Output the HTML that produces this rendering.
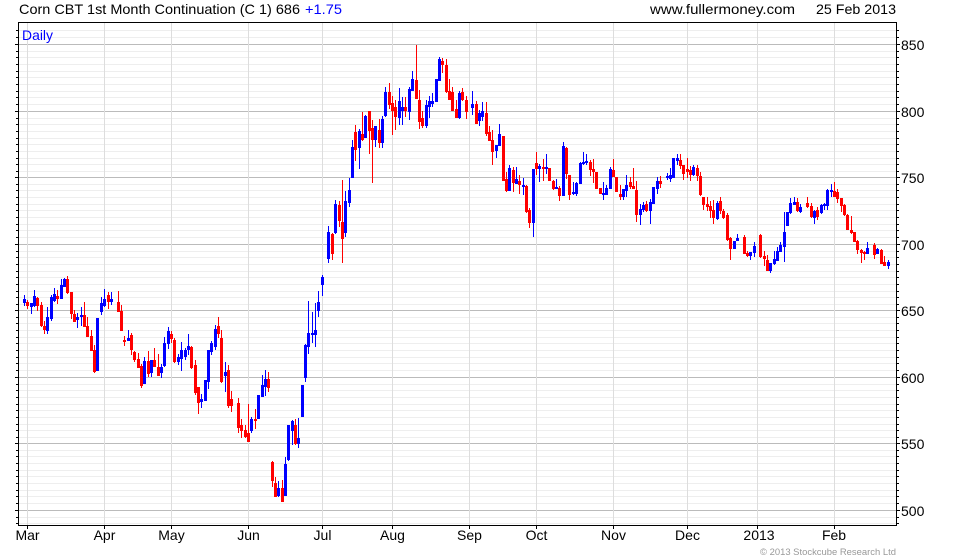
<!DOCTYPE html>
<html><head><meta charset="utf-8"><title>Corn CBT chart</title>
<style>html,body{margin:0;padding:0;background:#fff}svg{display:block}text{font-family:"Liberation Sans",Arial,sans-serif;font-size:14px;fill:#000}</style></head>
<body>
<svg width="980" height="560" viewBox="0 0 980 560" xmlns="http://www.w3.org/2000/svg">
<defs>
<path id="m" d="M0 30.5H1M0 37.5H1M0 51.5H1M0 57.5H1M0 64.5H1M0 71.5H1M0 77.5H1M0 84.5H1M0 91.5H1M0 97.5H1M0 104.5H1M0 118.5H1M0 124.5H1M0 131.5H1M0 138.5H1M0 144.5H1M0 151.5H1M0 158.5H1M0 164.5H1M0 171.5H1M0 184.5H1M0 190.5H1M0 197.5H1M0 204.5H1M0 210.5H1M0 217.5H1M0 224.5H1M0 230.5H1M0 237.5H1M0 251.5H1M0 257.5H1M0 264.5H1M0 271.5H1M0 277.5H1M0 284.5H1M0 291.5H1M0 297.5H1M0 304.5H1M0 317.5H1M0 323.5H1M0 330.5H1M0 337.5H1M0 343.5H1M0 350.5H1M0 357.5H1M0 363.5H1M0 370.5H1M0 384.5H1M0 390.5H1M0 397.5H1M0 404.5H1M0 410.5H1M0 417.5H1M0 424.5H1M0 430.5H1M0 437.5H1M0 450.5H1M0 456.5H1M0 463.5H1M0 470.5H1M0 476.5H1M0 483.5H1M0 490.5H1M0 496.5H1M0 503.5H1M0 517.5H1M0 523.5H1"/>
<path id="j" d="M0 44.5H1M0 111.5H1M0 177.5H1M0 244.5H1M0 310.5H1M0 377.5H1M0 443.5H1M0 510.5H1"/>
</defs>
<g shape-rendering="crispEdges" fill="none" stroke-width="1">
<use href="#m" stroke="#eeeeee" transform="translate(19 0) scale(877 1)"/>
<use href="#j" stroke="#bbbbbb" transform="translate(19 0) scale(877 1)"/>
<path stroke="#dddddd" d="M27.5 23V525M104.5 23V525M171.5 23V525M248.5 23V525M322.5 23V525M392.5 23V525M469.5 23V525M536.5 23V525M613.5 23V525M687.5 23V525M757.5 23V525M834.5 23V525"/>
<path stroke="#000" d="M18.5 22.5H896.5V525.5H18.5Z"/>
<use href="#m" stroke="#000" transform="translate(16 0) scale(2 1)"/>
<use href="#m" stroke="#000" transform="translate(897 0) scale(2 1)"/>
<use href="#j" stroke="#000" transform="translate(15 0) scale(3 1)"/>
<use href="#j" stroke="#000" transform="translate(897 0) scale(3 1)"/>
<path stroke="#000" d="M27.5 526V529M104.5 526V529M171.5 526V529M248.5 526V529M322.5 526V529M392.5 526V529M469.5 526V529M536.5 526V529M613.5 526V529M687.5 526V529M757.5 526V529M834.5 526V529"/>

<!-- blue wicks -->
<path stroke="#0000ff" d="M24.5 295V306M31.5 303V314M34.5 290V307M47.5 307V334M51.5 295V321M54.5 288V302M61.5 279V299M64.5 278V287M77.5 313V328M81.5 307V326M97.5 318V371M101.5 297V315M104.5 289V307M111.5 292V305M128.5 330V341M144.5 357V384M151.5 360V377M161.5 364V378M164.5 337V367M168.5 327V349M178.5 354V365M181.5 342V371M185.5 348V360M188.5 334V355M201.5 394V408M205.5 380V401M208.5 350V389M211.5 341V355M215.5 325V350M225.5 362V392M251.5 417V433M258.5 395V419M262.5 375V397M265.5 370V396M278.5 481V497M285.5 457V496M288.5 425V461M292.5 420V445M298.5 418V448M302.5 385V417M305.5 344V382M308.5 301V354M312.5 312V343M315.5 303V347M318.5 291V317M322.5 275V296M328.5 226V263M335.5 200V234M345.5 191V237M349.5 178V207M352.5 140V178M359.5 129V169M365.5 115V138M375.5 126V147M382.5 116V148M385.5 87V117M399.5 88V125M402.5 97V125M409.5 87V120M412.5 71V91M426.5 100V128M429.5 96V118M432.5 93V107M436.5 79V102M439.5 57V81M459.5 91V119M472.5 91V115M479.5 110V126M482.5 102V121M496.5 145V158M499.5 124V146M509.5 165V191M516.5 167V184M523.5 178V195M533.5 169V237M539.5 164V182M546.5 154V174M556.5 179V189M563.5 142V196M573.5 182V195M576.5 182V196M580.5 162V184M583.5 152V165M586.5 154V165M603.5 182V200M606.5 185V195M610.5 167V189M623.5 189V200M626.5 175V197M640.5 204V225M643.5 202V212M650.5 199V224M653.5 187V204M657.5 177V194M667.5 173V180M670.5 168V182M673.5 158V178M677.5 154V165M693.5 165V176M717.5 201V220M734.5 241V249M737.5 234V241M750.5 252V260M754.5 242V257M770.5 263V273M774.5 251V265M777.5 247V261M780.5 242V252M784.5 212V262M787.5 212V226M790.5 198V214M794.5 197V205M800.5 204V213M814.5 210V224M821.5 204V214M824.5 203V210M827.5 189V210M831.5 184V197M867.5 242V254M877.5 248V254M888.5 260V269"/>
<!-- blue bodies -->
<path stroke="#0000ff" stroke-width="3" d="M24.5 299V303M31.5 303V307M34.5 296V306M47.5 317V331M51.5 297V319M54.5 294V301M61.5 285V299M64.5 279V287M77.5 317V320M81.5 315V317M97.5 318V371M101.5 303V312M104.5 299V306M111.5 299V302M128.5 338V341M144.5 361V384M151.5 360V373M161.5 367V373M164.5 343V366M168.5 331V344M178.5 357V362M181.5 350V359M185.5 350V357M188.5 346V350M201.5 399V402M205.5 380V401M208.5 350V382M211.5 343V352M215.5 329V347M225.5 372V376M251.5 419V431M258.5 395V419M262.5 385V397M265.5 379V387M278.5 488V496M285.5 464V496M288.5 425V460M292.5 421V431M298.5 438V444M302.5 385V417M305.5 345V378M308.5 333V347M312.5 333V335M315.5 330V335M318.5 302V311M322.5 277V285M328.5 232V259M335.5 204V233M345.5 201V233M349.5 190V203M352.5 147V178M359.5 131V148M365.5 116V138M375.5 126V140M382.5 119V143M385.5 92V116M399.5 101V118M402.5 107V111M409.5 89V112M412.5 79V91M426.5 105V126M429.5 101V107M432.5 101V104M436.5 79V102M439.5 59V81M459.5 93V118M472.5 104V108M479.5 113V121M482.5 111V117M496.5 145V151M499.5 134V146M509.5 168V191M516.5 179V184M523.5 185V187M533.5 169V223M539.5 166V169M546.5 167V169M556.5 187V189M563.5 146V196M573.5 192V194M576.5 183V194M580.5 163V184M583.5 162V164M586.5 161V163M603.5 193V195M606.5 188V195M610.5 169V189M623.5 189V197M626.5 185V191M640.5 209V215M643.5 205V210M650.5 202V211M653.5 187V204M657.5 181V189M667.5 176V178M670.5 175V179M673.5 158V178M677.5 158V161M693.5 167V175M717.5 203V219M734.5 241V249M737.5 238V241M750.5 252V256M754.5 246V253M770.5 263V271M774.5 259V264M777.5 251V261M780.5 245V252M784.5 232V247M787.5 212V226M790.5 203V213M794.5 202V205M800.5 207V212M814.5 211V218M821.5 205V213M824.5 204V206M827.5 190V206M831.5 190V192M867.5 248V254M877.5 249V254M888.5 262V266"/>
<!-- red wicks -->
<path stroke="#ff0000" d="M27.5 300V309M37.5 297V311M41.5 302V327M44.5 321V334M57.5 290V304M67.5 276V294M71.5 292V319M74.5 310V322M84.5 302V327M87.5 317V337M91.5 330V351M94.5 345V373M108.5 292V309M118.5 291V312M121.5 305V331M124.5 336V346M131.5 333V355M134.5 351V362M138.5 353V368M141.5 364V388M148.5 351V377M154.5 348V367M158.5 354V376M171.5 331V343M174.5 338V363M191.5 346V369M195.5 360V395M198.5 387V414M218.5 317V338M221.5 330V383M228.5 365V408M231.5 391V412M238.5 398V433M241.5 419V438M245.5 425V438M248.5 404V442M255.5 409V429M268.5 372V392M272.5 461V487M275.5 477V497M282.5 480V502M295.5 419V445M332.5 233V260M339.5 201V227M342.5 180V263M355.5 125V161M362.5 112V141M369.5 111V154M372.5 120V183M379.5 119V148M389.5 83V109M392.5 96V135M395.5 100V130M405.5 97V117M416.5 45V99M419.5 90V129M422.5 111V128M442.5 58V73M446.5 59V93M449.5 79V100M452.5 87V111M456.5 100V118M462.5 88V101M466.5 96V119M476.5 101V124M486.5 102V136M489.5 126V141M492.5 130V165M503.5 136V181M506.5 172V192M513.5 167V192M519.5 175V194M526.5 185V213M529.5 208V228M536.5 152V175M543.5 159V181M549.5 168V181M553.5 180V190M559.5 186V201M566.5 147V179M569.5 175V200M590.5 160V176M593.5 159V183M596.5 172V189M600.5 188V194M613.5 159V177M616.5 177V192M620.5 185V200M630.5 177V189M633.5 168V189M636.5 181V222M646.5 201V212M660.5 176V188M680.5 154V169M683.5 165V180M687.5 158V178M690.5 166V181M697.5 165V181M700.5 172V196M703.5 197V210M707.5 197V211M710.5 201V218M713.5 200V224M720.5 197V214M723.5 209V219M727.5 213V241M730.5 237V260M744.5 235V254M747.5 251V257M760.5 234V258M764.5 251V266M767.5 255V271M797.5 198V212M807.5 197V208M811.5 203V218M817.5 207V220M834.5 182V197M837.5 189V203M841.5 198V212M844.5 204V216M847.5 214V230M851.5 216V234M854.5 232V242M857.5 240V254M861.5 249V263M864.5 251V260M874.5 243V259M881.5 249V264M884.5 256V266"/>
<!-- red bodies -->
<path stroke="#ff0000" stroke-width="3" d="M27.5 302V306M37.5 298V306M41.5 305V326M44.5 326V330M57.5 296V299M67.5 279V293M71.5 292V314M74.5 314V322M84.5 315V327M87.5 326V337M91.5 336V351M94.5 350V372M108.5 295V302M118.5 302V312M121.5 311V331M124.5 340V342M131.5 335V350M134.5 352V360M138.5 359V368M141.5 366V386M148.5 361V374M154.5 360V367M158.5 367V376M171.5 334V339M174.5 340V362M191.5 347V368M195.5 365V393M198.5 387V403M218.5 326V334M221.5 338V382M228.5 370V406M231.5 399V406M238.5 403V428M241.5 425V431M245.5 430V437M248.5 433V442M255.5 419V421M268.5 379V388M272.5 462V481M275.5 483V497M282.5 488V502M295.5 425V444M332.5 234V254M339.5 205V221M342.5 222V239M355.5 132V150M362.5 134V140M369.5 111V131M372.5 128V140M379.5 130V143M389.5 92V105M392.5 103V111M395.5 107V117M405.5 107V111M416.5 80V99M419.5 100V122M422.5 118V126M442.5 61V65M446.5 65V92M449.5 91V100M452.5 92V111M456.5 109V118M462.5 92V100M466.5 100V112M476.5 104V124M486.5 113V134M489.5 132V141M492.5 140V152M503.5 136V181M506.5 179V191M513.5 170V183M519.5 181V185M526.5 186V212M529.5 210V223M536.5 163V169M543.5 167V169M549.5 168V181M553.5 181V189M559.5 188V196M566.5 148V174M569.5 175V195M590.5 162V170M593.5 169V172M596.5 172V189M600.5 188V194M613.5 170V177M616.5 177V192M620.5 194V197M630.5 182V187M633.5 186V189M636.5 190V215M646.5 204V211M660.5 181V184M680.5 160V166M683.5 165V174M687.5 169V172M690.5 170V175M697.5 168V176M700.5 176V195M703.5 197V205M707.5 204V207M710.5 206V211M713.5 210V218M720.5 201V211M723.5 211V218M727.5 215V240M730.5 238V249M744.5 237V254M747.5 253V256M760.5 235V257M764.5 256V259M767.5 260V271M797.5 202V211M807.5 203V207M811.5 206V217M817.5 210V217M834.5 191V197M837.5 192V199M841.5 198V206M844.5 205V215M847.5 215V230M851.5 230V233M854.5 232V242M857.5 241V250M861.5 250V253M864.5 252V254M874.5 245V255M881.5 250V264M884.5 262V266"/>
</g>

<text x="19" y="14" textLength="281" lengthAdjust="spacingAndGlyphs">Corn CBT 1st Month Continuation (C 1) 686</text>
<text x="305" y="14" textLength="37" lengthAdjust="spacingAndGlyphs" style="fill:#0000ff">+1.75</text>
<text x="650" y="14" textLength="145" lengthAdjust="spacingAndGlyphs">www.fullermoney.com</text>
<text x="816" y="14" textLength="80" lengthAdjust="spacingAndGlyphs">25 Feb 2013</text>
<text x="22" y="40" textLength="31" lengthAdjust="spacingAndGlyphs" style="fill:#0000ff">Daily</text>

<g>
<text x="901" y="50">850</text>
<text x="901" y="117">800</text>
<text x="901" y="183">750</text>
<text x="901" y="250">700</text>
<text x="901" y="316">650</text>
<text x="901" y="383">600</text>
<text x="901" y="449">550</text>
<text x="901" y="516">500</text>
</g>
<g text-anchor="middle">
<text x="27.5" y="540">Mar</text>
<text x="104.5" y="540">Apr</text>
<text x="171.5" y="540">May</text>
<text x="248.5" y="540">Jun</text>
<text x="322.5" y="540">Jul</text>
<text x="392.5" y="540">Aug</text>
<text x="469.5" y="540">Sep</text>
<text x="536.5" y="540">Oct</text>
<text x="613.5" y="540">Nov</text>
<text x="687.5" y="540">Dec</text>
<text x="759" y="540">2013</text>
<text x="834" y="540">Feb</text>
</g>
<text x="760" y="555" textLength="136" lengthAdjust="spacingAndGlyphs" style="font-size:9px;fill:#999999">© 2013 Stockcube Research Ltd</text>
</svg>
</body></html>
